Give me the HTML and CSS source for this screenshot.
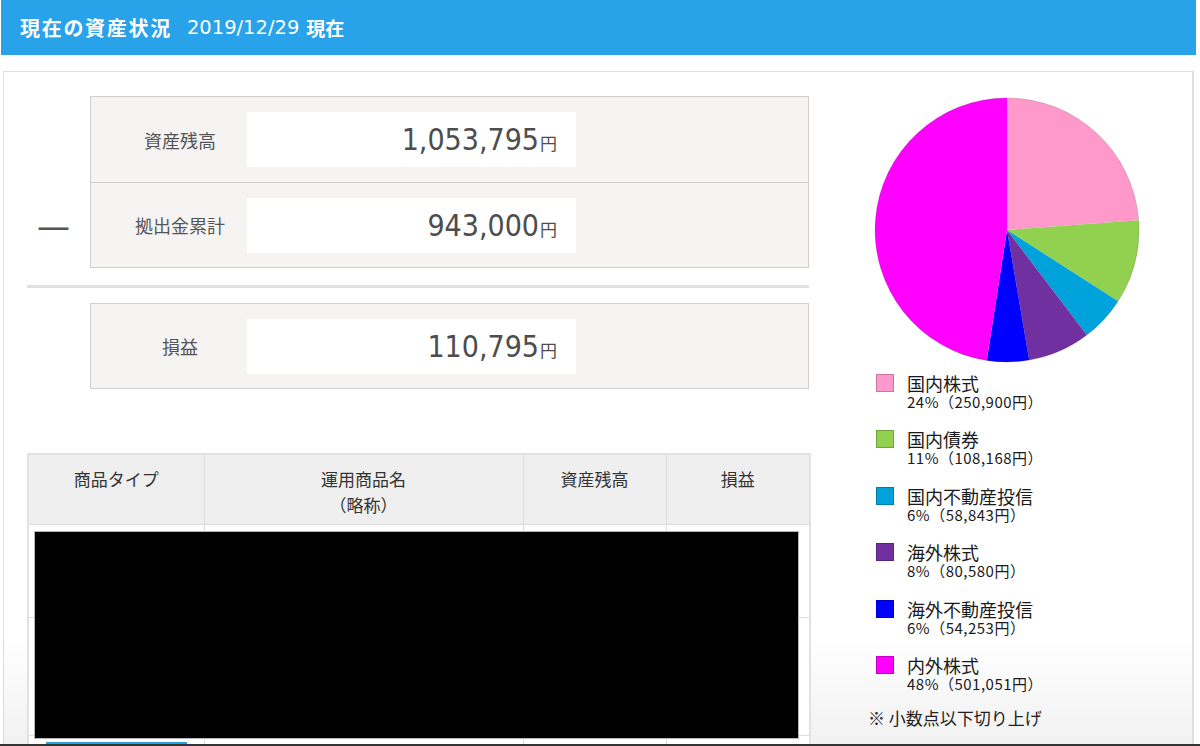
FILE: index.html
```html
<!DOCTYPE html>
<html lang="ja">
<head>
<meta charset="utf-8">
<title>現在の資産状況</title>
<link rel="stylesheet" href="styles.css">
</head>
<body>
<div class="page">
  <header class="title-bar">
    <span class="title">現在の資産状況</span>
    <span class="date">2019/12/29</span>
    <span class="date-suffix">現在</span>
  </header>

  <main class="panel">
    <section class="left">
      <div class="calc">
        <div class="minus"><span class="minus-sign">—</span></div>
        <div class="sum-box">
          <div class="sum-row">
            <div class="sum-label">資産残高</div>
            <div class="sum-value"><span class="num">1,053,795</span><span class="yen">円</span></div>
          </div>
          <div class="sum-row sum-row-sep">
            <div class="sum-label">拠出金累計</div>
            <div class="sum-value"><span class="num">943,000</span><span class="yen">円</span></div>
          </div>
        </div>
      </div>

      <div class="divider"></div>

      <div class="profit">
        <div class="sum-box">
          <div class="sum-row">
            <div class="sum-label">損益</div>
            <div class="sum-value"><span class="num">110,795</span><span class="yen">円</span></div>
          </div>
        </div>
      </div>

      <div class="table-wrap">
        <table class="holdings">
          <colgroup>
            <col class="c1"><col class="c2"><col class="c3"><col class="c4">
          </colgroup>
          <thead>
            <tr>
              <th>商品タイプ</th>
              <th>運用商品名<br>（略称）</th>
              <th>資産残高</th>
              <th>損益</th>
            </tr>
          </thead>
          <tbody>
            <tr class="r1"><td></td><td></td><td></td><td></td></tr>
            <tr class="r2"><td></td><td></td><td></td><td></td></tr>
            <tr class="r3"><td><div class="btn"></div></td><td></td><td></td><td></td></tr>
          </tbody>
        </table>
        <div class="redact"></div>
      </div>
    </section>

    <aside class="right">
      <svg class="pie" width="266" height="266" viewBox="-133 -133 266 266">
        <path d="M0 0 L0 -132 A132 132 0 0 1 131.63 -9.87 Z" fill="#ff99cc"/>
        <path d="M0 0 L131.63 -9.87 A132 132 0 0 1 111.10 71.28 Z" fill="#92d050"/>
        <path d="M0 0 L111.10 71.28 A132 132 0 0 1 79.86 105.10 Z" fill="#00a2db"/>
        <path d="M0 0 L79.86 105.10 A132 132 0 0 1 22.24 130.11 Z" fill="#7030a0"/>
        <path d="M0 0 L22.24 130.11 A132 132 0 0 1 -20.26 130.43 Z" fill="#0000ff"/>
        <path d="M0 0 L-20.26 130.43 A132 132 0 0 1 0 -132 Z" fill="#ff00ff"/>
        <circle cx="0" cy="0" r="132" fill="none" stroke="rgba(0,0,0,0.18)" stroke-width="0.8"/>
      </svg>

      <ul class="legend">
        <li><span class="sw sw-pink"></span><div class="lg-text"><div class="lg-name">国内株式</div><div class="lg-val">24%（250,900円）</div></div></li>
        <li><span class="sw sw-green"></span><div class="lg-text"><div class="lg-name">国内債券</div><div class="lg-val">11%（108,168円）</div></div></li>
        <li><span class="sw sw-cyan"></span><div class="lg-text"><div class="lg-name">国内不動産投信</div><div class="lg-val">6%（58,843円）</div></div></li>
        <li><span class="sw sw-purple"></span><div class="lg-text"><div class="lg-name">海外株式</div><div class="lg-val">8%（80,580円）</div></div></li>
        <li><span class="sw sw-blue"></span><div class="lg-text"><div class="lg-name">海外不動産投信</div><div class="lg-val">6%（54,253円）</div></div></li>
        <li><span class="sw sw-magenta"></span><div class="lg-text"><div class="lg-name">内外株式</div><div class="lg-val">48%（501,051円）</div></div></li>
      </ul>
      <p class="note">※ 小数点以下切り上げ</p>
    </aside>
  </main>

  <div class="bottom-edge"></div>
</div>
</body>
</html>
```

FILE: styles.css
```css
* { box-sizing: border-box; }

html, body {
  margin: 0;
  padding: 0;
  background: #ffffff;
}

body {
  font-family: "Noto Sans CJK JP", "DejaVu Sans", sans-serif;
  color: #333;
}

.page {
  width: 1200px;
  height: 746px;
  display: flex;
  flex-direction: column;
  overflow: hidden;
}

/* ---------- title bar ---------- */
.title-bar {
  flex: 0 0 55px;
  margin: 0 4px 0 1px;
  background: #28a2e8;
  color: #fff;
  display: flex;
  align-items: center;
  padding-left: 19px;
  font-size: 20px;
  line-height: 1;
}

.title {
  font-weight: bold;
  letter-spacing: 1.7px;
  margin-right: 15px;
}

.date {
  font-family: "DejaVu Sans", sans-serif;
  font-size: 19.5px;
  margin-right: 7px;
}

.date-suffix {
  font-weight: bold;
  font-size: 19px;
}

/* ---------- panel ---------- */
.panel {
  flex: 1 1 auto;
  min-height: 0;
  margin: 16px 6px 0 3px;
  border: 1px solid #dedede;
  border-right-width: 2px;
  border-bottom: none;
  background: linear-gradient(to bottom, #ffffff 0%, #ffffff 84%, #f1f1f1 100%);
  display: flex;
  padding: 24px 0 0 23px;
  overflow: hidden;
}

.left {
  width: 782px;
  flex: 0 0 782px;
}

.calc {
  display: grid;
  grid-template-columns: 63px 719px;
}

.minus {
  display: flex;
  flex-direction: column;
  justify-content: flex-end;
  padding: 0 0 25px 10px;
}

.minus-sign {
  font-family: "DejaVu Sans", sans-serif;
  font-size: 33px;
  line-height: 33px;
  color: #555;
}

.sum-box {
  width: 719px;
  background: #f5f4f2;
  border: 1px solid #cfcfcf;
}

.sum-row {
  height: 85px;
  display: flex;
  align-items: center;
}

.sum-row-sep {
  height: 85px;
  border-top: 1px solid #cfcfcf;
}

.sum-label {
  width: 156px;
  padding-left: 22px;
  text-align: center;
  font-size: 18px;
  color: #555;
}

.sum-value {
  width: 329px;
  height: 55px;
  background: #ffffff;
  display: flex;
  align-items: baseline;
  justify-content: flex-end;
  padding: 0 19px 0 0;
  line-height: 55px;
  color: #4d4d4d;
}

.num {
  font-family: "DejaVu Sans Condensed", "DejaVu Sans", sans-serif;
  font-stretch: condensed;
  font-size: 30px;
}

.yen {
  font-size: 17px;
  margin-left: 1px;
}

.divider {
  height: 3px;
  margin-top: 17px;
  background: #e0e0e0;
}

.profit {
  margin: 15px 0 0 63px;
}

.profit .sum-row {
  height: 84px;
}

/* ---------- table ---------- */
.table-wrap {
  position: relative;
  margin-top: 64px;
}

.holdings {
  width: 782px;
  border-collapse: collapse;
  table-layout: fixed;
  border: 2px solid #e2e2e2;
}

.holdings .c1 { width: 176px; }
.holdings .c2 { width: 319px; }
.holdings .c3 { width: 143px; }
.holdings .c4 { width: 144px; }

.holdings th {
  background: #efefef;
  border: 1px solid #dcdcdc;
  height: 70px;
  vertical-align: top;
  padding-top: 11px;
  font-weight: normal;
  font-size: 17px;
  line-height: 26px;
  color: #333;
}

.holdings td {
  border: 1px solid #dcdcdc;
  background: #fff;
  vertical-align: top;
}

.holdings .r1 td { height: 93px; }
.holdings .r2 td { height: 118px; }
.holdings .r3 td { height: 40px; padding: 6px 0 0 17px; }

.btn {
  width: 141px;
  height: 30px;
  background: #27a0e0;
}

.redact {
  position: absolute;
  left: 7px;
  top: 78px;
  width: 765px;
  height: 208px;
  background: #000;
  border: 1px solid #b5b5b5;
}

/* ---------- right column ---------- */
.right {
  flex: 0 0 320px;
  margin-left: 59px;
  display: flex;
  flex-direction: column;
}

.pie {
  display: block;
  margin: 1px 0 0 6px;
}

.legend {
  list-style: none;
  margin: 10px 0 0 8px;
  padding: 0;
}

.legend li {
  display: flex;
  align-items: flex-start;
  height: 38px;
  margin-bottom: 18.4px;
}

.sw {
  flex: 0 0 18px;
  width: 18px;
  height: 18px;
  margin-top: 1px;
  margin-right: 13px;
  border: 1px solid rgba(0, 0, 0, 0.22);
}

.sw-pink { background: #ff99cc; }
.sw-green { background: #92d050; }
.sw-cyan { background: #00a2db; }
.sw-purple { background: #7030a0; }
.sw-blue { background: #0000ff; }
.sw-magenta { background: #ff00ff; }

.lg-text {
  color: #1a1a1a;
}

.lg-name {
  font-size: 18px;
  line-height: 20px;
}

.lg-val {
  font-size: 15px;
  line-height: 18px;
  letter-spacing: 0.5px;
}

.note {
  margin: -4px 0 0 0;
  font-size: 17px;
  line-height: 22px;
  color: #222;
}

.bottom-edge {
  flex: 0 0 2px;
  background: #333;
}
```
